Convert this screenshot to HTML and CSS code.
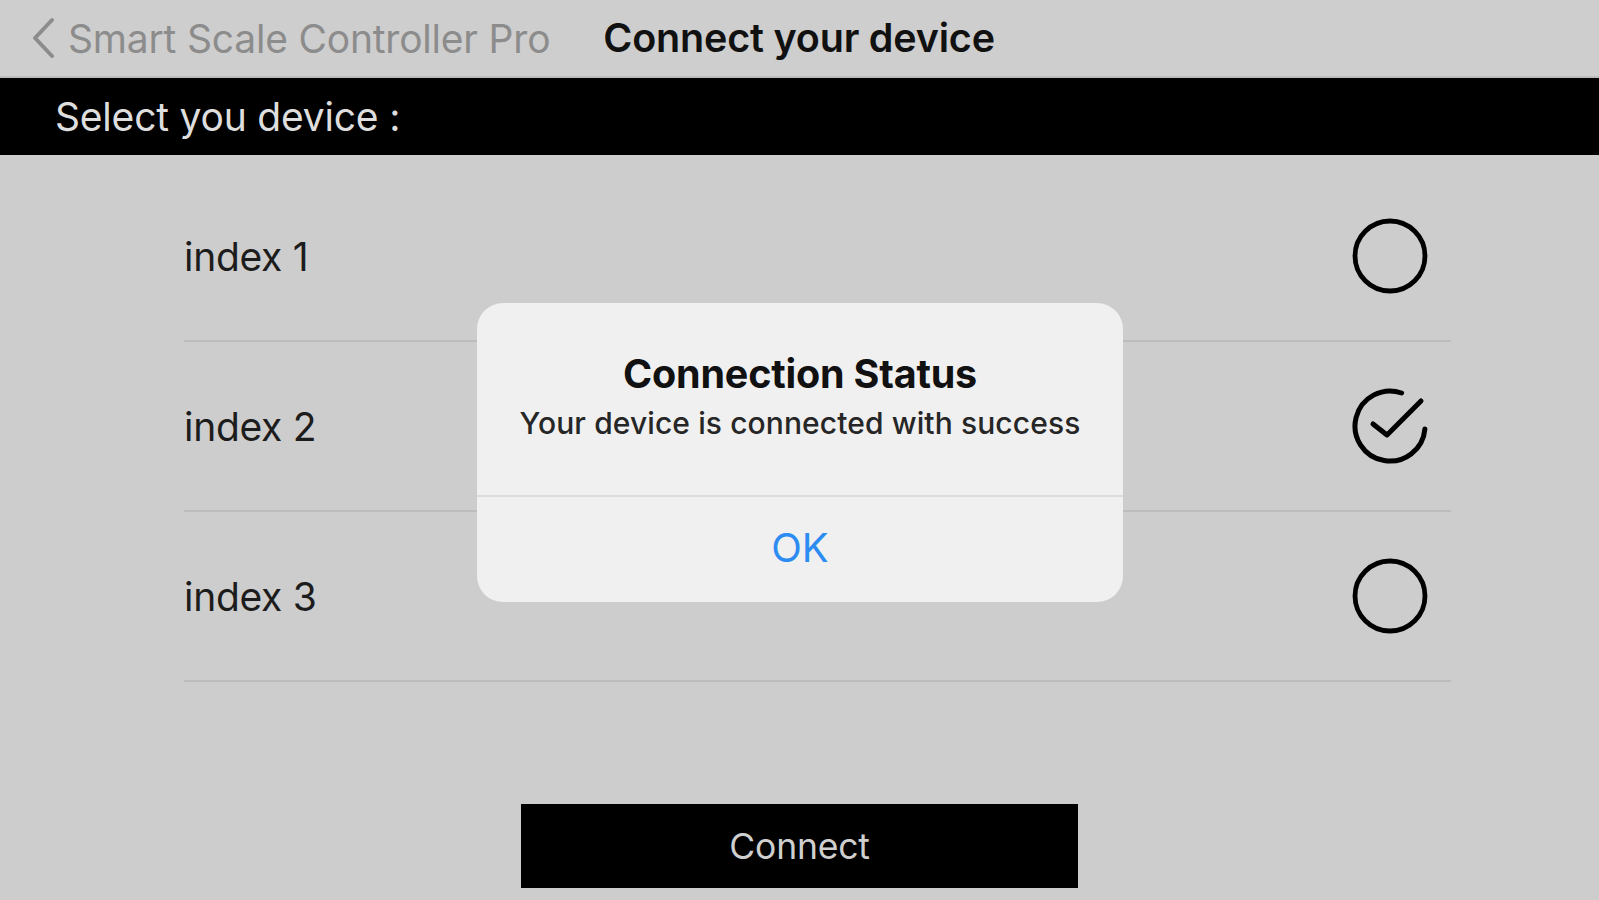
FILE: index.html
```html
<!DOCTYPE html>
<html lang="en">
<head>
<meta charset="utf-8">
<title>Connect your device</title>
<link rel="stylesheet" href="styles.css">
</head>
<body>
<div class="screen">
  <header class="navbar">
    <div class="back">
      <svg class="chevron" width="26" height="42" viewBox="0 0 26 42"><path d="M22 3 L5 21 L22 39" fill="none" stroke="#8c8c8c" stroke-width="4" stroke-linecap="round" stroke-linejoin="round"/></svg>
      <span class="back-label">Smart Scale Controller Pro</span>
    </div>
    <div class="nav-title">Connect your device</div>
  </header>
  <div class="section-bar">Select you device :</div>
  <ul class="device-list">
    <li class="device-row">
      <span class="device-name">index 1</span>
      <svg class="radio" width="80" height="80" viewBox="0 0 80 80"><circle cx="40" cy="40" r="35" fill="none" stroke="#000" stroke-width="4.8"/></svg>
    </li>
    <li class="device-row">
      <span class="device-name">index 2</span>
      <svg class="radio" width="80" height="80" viewBox="0 0 80 80"><path d="M51.6 7 A35 35 0 1 0 74.9 43" fill="none" stroke="#000" stroke-width="5" stroke-linecap="round"/><path d="M23 38 L37 49 L71 15" fill="none" stroke="#000" stroke-width="5" stroke-linecap="round" stroke-linejoin="round"/></svg>
    </li>
    <li class="device-row">
      <span class="device-name">index 3</span>
      <svg class="radio" width="80" height="80" viewBox="0 0 80 80"><circle cx="40" cy="40" r="35" fill="none" stroke="#000" stroke-width="4.8"/></svg>
    </li>
  </ul>
  <div class="actions">
    <button class="connect-btn" type="button">Connect</button>
  </div>

  <div class="alert">
    <div class="alert-body">
      <div class="alert-title">Connection Status</div>
      <div class="alert-message">Your device is connected with success</div>
    </div>
    <div class="alert-action">OK</div>
  </div>
</div>
</body>
</html>
```

FILE: styles.css
```css
* { box-sizing: border-box; }
html, body {
  margin: 0;
  padding: 0;
  background: #cdcdcd;
}
body {
  font-family: Inter, "Noto Sans", "Liberation Sans", sans-serif;
  width: 1599px;
  height: 900px;
  overflow: hidden;
}
.screen {
  position: relative;
  width: 1599px;
  height: 900px;
}
.navbar {
  height: 78px;
  background: #cecece;
  border-bottom: 2px solid #bcbcbc;
  display: flex;
  align-items: center;
  padding-left: 30px;
}
.back {
  display: flex;
  align-items: center;
  gap: 12px;
}
.chevron { display: block; }
.back-label {
  color: #8c8c8c;
  font-size: 39px;
  letter-spacing: -0.2px;
}
.nav-title {
  margin-left: 53px;
  color: #111;
  font-size: 39.5px;
  font-weight: 600;
  letter-spacing: -0.2px;
}
.section-bar {
  height: 77px;
  background: #000;
  color: #dedede;
  font-size: 39px;
  display: flex;
  align-items: center;
  padding-left: 55px;
  letter-spacing: -0.2px;
}
.device-list {
  list-style: none;
  margin: 0;
  padding: 17px 148px 0 184px;
}
.device-row {
  height: 170px;
  border-bottom: 2px solid #bdbdbd;
  display: flex;
  align-items: center;
  justify-content: space-between;
  padding-right: 21px;
}
.device-name {
  font-size: 39px;
  color: #1c1c1c;
  letter-spacing: -0.3px;
}
.radio { display: block; }
.actions {
  display: flex;
  justify-content: center;
  padding-top: 122px;
}
.connect-btn {
  width: 557px;
  height: 84px;
  background: #000;
  border: none;
  color: #cfcfcf;
  font-family: inherit;
  font-size: 35.5px;
  letter-spacing: -0.2px;
}
.alert {
  position: absolute;
  left: 477px;
  top: 303px;
  width: 646px;
  height: 299px;
  background: #f0f0f0;
  border-radius: 26px;
  display: flex;
  flex-direction: column;
  overflow: hidden;
}
.alert-body {
  height: 194px;
  border-bottom: 2px solid #dcdcdc;
  display: flex;
  flex-direction: column;
  align-items: center;
  padding-top: 48px;
}
.alert-title {
  font-size: 39.5px;
  font-weight: 650;
  color: #111;
  line-height: 46px;
  letter-spacing: -0.2px;
}
.alert-message {
  font-size: 30px;
  color: #262626;
  line-height: 36px;
  margin-top: 8px;
  font-weight: 500;
  letter-spacing: 0.1px;
}
.alert-action {
  flex: 1;
  display: flex;
  align-items: center;
  justify-content: center;
  color: #2c8cf2;
  font-size: 40px;
  padding-bottom: 4px;
}
```
